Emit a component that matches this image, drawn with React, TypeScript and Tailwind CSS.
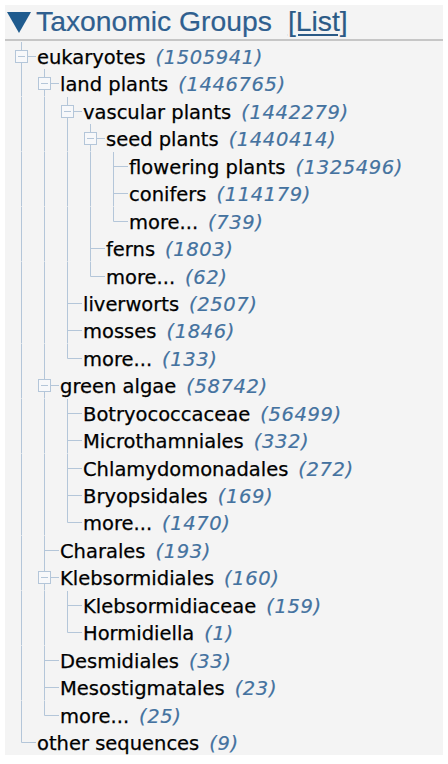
import React from "react";

type TaxNode = {
    name: string;
    count: number;
    children?: TaxNode[];
};

const tree: TaxNode[] = [
    {
        name: "eukaryotes",
        count: 1505941,
        children: [
            {
                name: "land plants",
                count: 1446765,
                children: [
                    {
                        name: "vascular plants",
                        count: 1442279,
                        children: [
                            {
                                name: "seed plants",
                                count: 1440414,
                                children: [
                                    { name: "flowering plants", count: 1325496 },
                                    { name: "conifers", count: 114179 },
                                    { name: "more...", count: 739 },
                                ],
                            },
                            { name: "ferns", count: 1803 },
                            { name: "more...", count: 62 },
                        ],
                    },
                    { name: "liverworts", count: 2507 },
                    { name: "mosses", count: 1846 },
                    { name: "more...", count: 133 },
                ],
            },
            {
                name: "green algae",
                count: 58742,
                children: [
                    { name: "Botryococcaceae", count: 56499 },
                    { name: "Microthamniales", count: 332 },
                    { name: "Chlamydomonadales", count: 272 },
                    { name: "Bryopsidales", count: 169 },
                    { name: "more...", count: 1470 },
                ],
            },
            { name: "Charales", count: 193 },
            {
                name: "Klebsormidiales",
                count: 160,
                children: [
                    { name: "Klebsormidiaceae", count: 159 },
                    { name: "Hormidiella", count: 1 },
                ],
            },
            { name: "Desmidiales", count: 33 },
            { name: "Mesostigmatales", count: 23 },
            { name: "more...", count: 25 },
        ],
    },
    { name: "other sequences", count: 9 },
];

type Row = {
    node: TaxNode;
    guides: boolean[]; // does each ancestor level continue below this row
    last: boolean;
};

function flatten(nodes: TaxNode[], guides: boolean[], out: Row[]) {
    nodes.forEach((node, i) => {
        const last = i === nodes.length - 1;
        out.push({ node, guides, last });
        if (node.children) {
            flatten(node.children, [...guides, !last], out);
        }
    });
    return out;
}

const ROW_H = 27.45;
const LINE = "#b4c6d9";

function Guide({ on }: { on: boolean }) {
    return (
        <svg width="23" height={ROW_H} className="shrink-0 block">
            {on && <line x1="11.5" y1="0" x2="11.5" y2={ROW_H} stroke={LINE} strokeWidth="1" />}
        </svg>
    );
}

function Connector({ last, box }: { last: boolean; box: boolean }) {
    const mid = Math.round(ROW_H / 2) + 0.5;
    return (
        <svg width="23" height={ROW_H} className="shrink-0 block overflow-visible">
            <line x1="11.5" y1="0" x2="11.5" y2={last ? mid : ROW_H} stroke={LINE} strokeWidth="1" />
            <line x1="11.5" y1={mid} x2="26" y2={mid} stroke={LINE} strokeWidth="1" />
            {box && (
                <>
                    <rect x="5.5" y={mid - 6} width="12" height="12" fill="#f7f8fa" stroke={LINE} strokeWidth="1" />
                    <line x1="8" y1={mid} x2="15" y2={mid} stroke={LINE} strokeWidth="1" />
                </>
            )}
        </svg>
    );
}

export default function App() {
    const rows = flatten(tree, [], []);

    return (
        <div className="min-h-[764px] bg-white pt-[5px] px-[5px]">
            <div className="bg-[#f4f4f4]">
                <div className="flex items-center h-[36px] border-b-2 border-[#c6c6c6] pb-[1px]">
                    <svg width="24" height="21" viewBox="0 0 24 21" className="ml-[2px] mt-[1px] shrink-0">
                        <polygon points="0,0 24,0 12,21" fill="#1f5b8e" />
                    </svg>
                    <span className="ml-[5px] text-[28.3px] leading-none text-[#2f5f8f] font-['Liberation_Sans',Arial,sans-serif] [-webkit-text-stroke:0.2px_#2f5f8f]">
                        Taxonomic Groups
                    </span>
                    <span className="ml-[16px] text-[28.3px] leading-none text-[#2b5a86] underline underline-offset-[3px] decoration-[2px] font-['Liberation_Sans',Arial,sans-serif] [-webkit-text-stroke:0.2px_#2b5a86]">
                        [List]
                    </span>
                </div>

                <div className="pl-[5px] pt-[1px] font-['DejaVu_Sans',Verdana,sans-serif] text-[19.5px] text-black">
                    {rows.map((row, i) => (
                        <div key={i} className="flex items-start h-[27.45px]">
                            {row.guides.map((g, j) => (
                                <Guide key={j} on={g} />
                            ))}
                            <Connector last={row.last} box={!!row.node.children} />
                            <span className="pl-[4px] pt-[2px] leading-[27.45px] whitespace-nowrap [-webkit-text-stroke:0.25px_#000]">
                                {row.node.name}
                                <i className="ml-[10px] tracking-[0.6px] text-[#44729f] [-webkit-text-stroke:0.2px_#44729f]">
                                    ({row.node.count})
                                </i>
                            </span>
                        </div>
                    ))}
                </div>
            </div>
        </div>
    );
}
